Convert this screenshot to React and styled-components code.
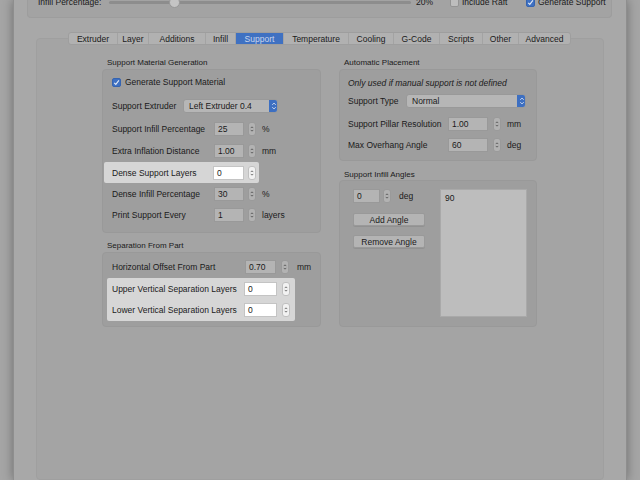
import React from 'react';
import styled, { createGlobalStyle } from 'styled-components';

const GlobalStyle = createGlobalStyle`
  * {
    margin: 0;
    padding: 0;
    box-sizing: border-box;
  }

  body {
    background: #a4a4a4;
    font-family: 'Liberation Sans', Arial, sans-serif;
    color: #1a1a1a;
    overflow: hidden;
  }
`;

const Screen = styled.div`
  width: 640px;
  height: 480px;
  overflow: hidden;
  display: flex;
  background: #a5a5a5;
`;

const Window = styled.div`
  width: 614px;
  height: 480px;
  margin-left: 13px;
  background: #a8a8a8;
  border-left: 1px solid #8e8e8e;
  border-right: 1px solid #8e8e8e;
  box-shadow: 0 0 10px rgba(0, 0, 0, 0.35);
  display: flex;
  flex-direction: column;
`;

const TopBox = styled.div`
  height: 18px;
  margin: 0 14px 0 13px;
  padding-left: 10px;
  background: #a3a3a3;
  border: 1px solid #9d9d9d;
  border-top: none;
  border-radius: 0 0 4px 4px;
  display: flex;
  align-items: flex-start;
`;

const TopRow = styled.div`
  height: 10px;
  margin-top: -3px;
  display: flex;
  align-items: center;
  font-size: 8.5px;
  white-space: nowrap;
`;

const TopLabel = styled.span`
  width: 71px;
`;

const SliderTrack = styled.div`
  position: relative;
  width: 302px;
  height: 3px;
  margin-top: 1px;
  background: #8d8d8d;
  border-radius: 2px;
`;

const SliderThumb = styled.div`
  position: absolute;
  left: 60px;
  top: -4px;
  width: 11px;
  height: 11px;
  border-radius: 50%;
  background: #c4c4c4;
  border: 1px solid #979797;
`;

const TopValue = styled.span`
  width: 34px;
  margin-left: 5px;
`;

const TopCheck = styled.div`
  width: ${p => p.$w}px;
  display: flex;
  align-items: center;
  gap: 3px;
`;

const CheckBox = styled.span`
  width: 9px;
  height: 9px;
  border-radius: 2px;
  display: inline-flex;
  align-items: center;
  justify-content: center;
  background: ${p => (p.$checked ? '#3e70c2' : '#bdbdbd')};
  border: 1px solid ${p => (p.$checked ? '#3564b0' : '#939393')};
  flex-shrink: 0;
`;

const TabView = styled.div`
  flex: 1;
  margin: 14px 22px 0 22px;
  display: flex;
  flex-direction: column;
`;

const TabStrip = styled.div`
  position: relative;
  z-index: 1;
  align-self: flex-start;
  margin-left: 32px;
  height: 13px;
  display: flex;
  background: #b1b1b1;
  border: 1px solid #9e9e9e;
  border-radius: 3px;
  overflow: hidden;
`;

const Tab = styled.div`
  width: ${p => p.$w}px;
  display: flex;
  align-items: center;
  justify-content: center;
  font-size: 8.5px;
  color: ${p => (p.$active ? '#c9d5ec' : '#1a1a1a')};
  background: ${p => (p.$active ? '#3f71c2' : 'transparent')};
  border-left: ${p => (p.$first ? 'none' : '1px solid #a3a3a3')};
`;

const Content = styled.div`
  flex: 1;
  margin-top: -7px;
  background: #a4a4a4;
  border: 1px solid #9f9f9f;
  border-radius: 4px;
  padding: 19px 0 0 65px;
  display: flex;
  align-items: flex-start;
  gap: 18px;
`;

const Column = styled.div`
  width: ${p => p.$w}px;
  display: flex;
  flex-direction: column;
`;

const SectionTitle = styled.div`
  font-size: 8px;
  line-height: 10px;
  padding-left: 5px;
  margin-top: ${p => p.$mt || 0}px;
  margin-bottom: ${p => (p.$mb === undefined ? 1 : p.$mb)}px;
`;

const GroupBox = styled.div`
  background: #9e9e9e;
  border: 1px solid #999999;
  border-radius: 4px;
  padding: ${p => p.$pad};
  display: flex;
  flex-direction: ${p => (p.$row ? 'row' : 'column')};
`;

const Row = styled.div`
  height: 14px;
  display: flex;
  align-items: center;
  font-size: 8.5px;
  white-space: nowrap;
  margin-top: ${p => p.$mt || 0}px;
`;

const Highlight = styled.div`
  background: #d6d6d6;
  border-radius: 2px;
  margin-left: ${p => p.$ml}px;
  width: ${p => p.$w}px;
  padding: ${p => p.$pad};
  margin-top: ${p => p.$mt || 0}px;
  display: flex;
  flex-direction: column;
  gap: 7px;
`;

const Label = styled.span`
  width: ${p => p.$w}px;
  flex-shrink: 0;
`;

const Italic = styled.span`
  font-style: italic;
`;

const Field = styled.div`
  width: ${p => p.$w}px;
  height: 14px;
  padding-left: 3px;
  display: flex;
  align-items: center;
  background: ${p => (p.$white ? '#ffffff' : '#b4b4b4')};
  border: 1px solid ${p => (p.$white ? '#c4c4c4' : '#999999')};
  font-size: 8.5px;
`;

const StepperBox = styled.span`
  width: 8px;
  height: 14px;
  margin-left: ${p => p.$ml || 4}px;
  border-radius: 3px;
  background: ${p => (p.$white ? '#f2f2f2' : '#b2b2b2')};
  border: 1px solid ${p => (p.$white ? '#c0c0c0' : '#9a9a9a')};
  display: inline-flex;
  flex-shrink: 0;
`;

const Unit = styled.span`
  margin-left: ${p => p.$ml || 6}px;
`;

const Select = styled.div`
  width: ${p => p.$w}px;
  height: 14px;
  display: flex;
  align-items: center;
  background: #b6b6b6;
  border: 1px solid #999999;
  border-radius: 3px;
  padding-left: 5px;
  font-size: 8.5px;
  overflow: hidden;
`;

const SelectText = styled.span`
  flex: 1;
`;

const SelectCap = styled.span`
  width: 9px;
  height: 14px;
  margin-right: -1px;
  margin-top: -1px;
  margin-bottom: -1px;
  background: #3d6fc1;
  border-radius: 0 3px 3px 0;
  display: inline-flex;
`;

const AngleControls = styled.div`
  display: flex;
  flex-direction: column;
`;

const Button = styled.div`
  width: 72px;
  height: 13px;
  margin-top: ${p => p.$mt}px;
  display: flex;
  align-items: center;
  justify-content: center;
  font-size: 8.5px;
  background: #b4b4b4;
  border: 1px solid #999999;
  border-radius: 2px;
  box-shadow: 0 1px 0 rgba(0, 0, 0, 0.08);
`;

const AngleList = styled.div`
  margin-left: auto;
  width: 87px;
  height: 128px;
  background: #bdbdbd;
  border: 1px solid #a9a9a9;
  padding: 3px 4px;
  font-size: 8.5px;
`;

const Chevrons = ({ color = '#3a3a3a' }) => (
  <svg width="8" height="12" viewBox="0 0 8 12" style={{ margin: 'auto' }}>
    <path d="M2.3 4.8 L4 3.1 L5.7 4.8" fill="none" stroke={color} strokeWidth="0.9" />
    <path d="M2.3 7.2 L4 8.9 L5.7 7.2" fill="none" stroke={color} strokeWidth="0.9" />
  </svg>
);

const Stepper = ({ ml, white }) => (
  <StepperBox $ml={ml} $white={white}>
    <Chevrons />
  </StepperBox>
);

const Check = () => (
  <svg width="7" height="7" viewBox="0 0 7 7">
    <path d="M1.2 3.8 L2.8 5.4 L5.9 1.4" fill="none" stroke="#e4ebf6" strokeWidth="1.1" />
  </svg>
);

const NumberRow = ({ label, lw, value, fw = 30, unit, ml, uml, white, mt }) => (
  <Row $mt={mt}>
    <Label $w={lw}>{label}</Label>
    <Field $w={fw} $white={white}>{value}</Field>
    <Stepper ml={ml} white={white} />
    {unit && <Unit $ml={uml}>{unit}</Unit>}
  </Row>
);

const tabs = [
  ['Extruder', 48], ['Layer', 31], ['Additions', 57], ['Infill', 30],
  ['Support', 48], ['Temperature', 65], ['Cooling', 45], ['G-Code', 46],
  ['Scripts', 43], ['Other', 36], ['Advanced', 52],
];

const App = () => (
  <>
    <GlobalStyle />
    <Screen>
      <Window>
        <TopBox>
          <TopRow>
            <TopLabel>Infill Percentage:</TopLabel>
            <SliderTrack>
              <SliderThumb />
            </SliderTrack>
            <TopValue>20%</TopValue>
            <TopCheck $w={76}>
              <CheckBox />
              <span>Include Raft</span>
            </TopCheck>
            <TopCheck $w={76}>
              <CheckBox $checked><Check /></CheckBox>
              <span>Generate Support</span>
            </TopCheck>
          </TopRow>
        </TopBox>

        <TabView>
          <TabStrip>
            {tabs.map(([name, w], i) => (
              <Tab key={name} $w={w} $first={i === 0} $active={name === 'Support'}>
                {name}
              </Tab>
            ))}
          </TabStrip>

          <Content>
            <Column $w={219}>
              <SectionTitle>Support Material Generation</SectionTitle>
              <GroupBox $pad="5px 0 10px 9px">
                <Row>
                  <CheckBox $checked><Check /></CheckBox>
                  <Unit $ml={4}>Generate Support Material</Unit>
                </Row>
                <Row $mt={10}>
                  <Label $w={71}>Support Extruder</Label>
                  <Select $w={95}>
                    <SelectText>Left Extruder 0.4</SelectText>
                    <SelectCap><Chevrons color="#dfe7f5" /></SelectCap>
                  </Select>
                </Row>
                <NumberRow mt={9} label="Support Infill Percentage" lw={102} value="25" unit="%" />
                <NumberRow mt={8} label="Extra Inflation Distance" lw={102} value="1.00" unit="mm" />
                <Highlight $ml={-8} $w={155} $pad="3.5px 0 3.5px 8px" $mt={4}>
                  <NumberRow label="Dense Support Layers" lw={101} value="0" fw={31} white />
                </Highlight>
                <NumberRow mt={4} label="Dense Infill Percentage" lw={102} value="30" unit="%" />
                <NumberRow mt={7} label="Print Support Every" lw={102} value="1" unit="layers" />
              </GroupBox>

              <SectionTitle $mt={8}>Separation From Part</SectionTitle>
              <GroupBox $pad="7px 0 5px 9px">
                <NumberRow label="Horizontal Offset From Part" lw={133} value="0.70" fw={31} ml={5} unit="mm" uml={8} />
                <Highlight $ml={-5} $w={188} $pad="4px 5px" $mt={4}>
                  <NumberRow label="Upper Vertical Separation Layers" lw={132} value="0" fw={34} ml={5} white />
                  <NumberRow label="Lower Vertical Separation Layers" lw={132} value="0" fw={34} ml={5} white />
                </Highlight>
              </GroupBox>
            </Column>

            <Column $w={198}>
              <SectionTitle>Automatic Placement</SectionTitle>
              <GroupBox $pad="6px 10px 8px 8px">
                <Row>
                  <Italic>Only used if manual support is not defined</Italic>
                </Row>
                <Row $mt={4}>
                  <Label $w={58}>Support Type</Label>
                  <Select $w={120}>
                    <SelectText>Normal</SelectText>
                    <SelectCap><Chevrons color="#dfe7f5" /></SelectCap>
                  </Select>
                </Row>
                <NumberRow mt={9} label="Support Pillar Resolution" lw={100} value="1.00" fw={40} ml={5} unit="mm" />
                <NumberRow mt={7} label="Max Overhang Angle" lw={100} value="60" fw={40} ml={5} unit="deg" />
              </GroupBox>

              <SectionTitle $mt={9} $mb={0}>Support Infill Angles</SectionTitle>
              <GroupBox $row $pad="8px 9px 9px 13px">
                <AngleControls>
                  <NumberRow label="" lw={0} value="0" fw={27} ml={3} unit="deg" uml={8} />
                  <Button $mt={10}>Add Angle</Button>
                  <Button $mt={9}>Remove Angle</Button>
                </AngleControls>
                <AngleList>90</AngleList>
              </GroupBox>
            </Column>
          </Content>
        </TabView>
      </Window>
    </Screen>
  </>
);

export default App;
